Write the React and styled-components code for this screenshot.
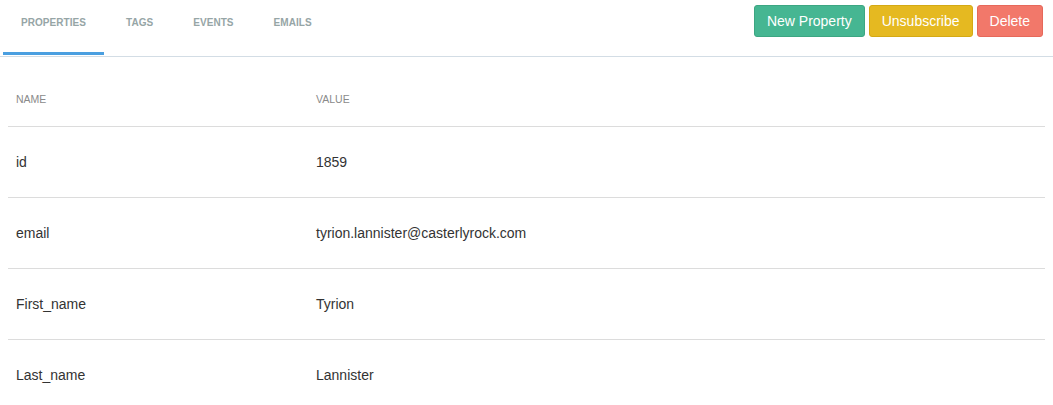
import React, {useState} from 'react';
import styled, {createGlobalStyle} from 'styled-components';

const GlobalStyle = createGlobalStyle`
  body {
    margin: 0;
    background: #fff;
    font-family: "Liberation Sans", Arial, sans-serif;
  }
`

const TopBar = styled.div`
  display: flex;
  align-items: stretch;
  justify-content: space-between;
  height: 56px;
  border-bottom: 1px solid #d3dde5;
`
const Tabs = styled.div`
  display: flex;
  padding-left: 1px;
`
const Tab = styled.div`
  position: relative;
  display: flex;
  align-items: center;
  padding: 0 20px 11px;
  font-size: 10px;
  font-weight: bold;
  letter-spacing: 0.05px;
  text-transform: uppercase;
  color: #96a5a6;
  cursor: pointer;

  &::after {
    content: '';
    display: ${props => props.active ? 'block' : 'none'};
    position: absolute;
    left: 2px;
    right: 2px;
    bottom: 1px;
    height: 3px;
    background-color: #4a9fe0;
  }
`
const Actions = styled.div`
  display: flex;
  gap: 4px;
  padding: 5px 10px 0 0;
`
const Button = styled.button`
  appearance: none;
  height: 32px;
  padding: 0 12px;
  border-radius: 3px;
  border: 1px solid ${props => props.border};
  background-color: ${props => props.bg};
  color: #fff;
  font-family: "Liberation Sans", Arial, sans-serif;
  font-size: 14px;
  cursor: pointer;
`
const Table = styled.div`
  margin: 0 8px;
  padding-top: 14px;
`
const Row = styled.div`
  display: grid;
  grid-template-columns: 300px 1fr;
  align-items: center;
  height: ${props => props.head ? '55px' : '70px'};
  border-bottom: 1px solid #dcdcdc;

  &:last-child {
    border-bottom: 0;
  }
`
const Cell = styled.div`
  padding: 0 8px;
  font-size: 14px;
  color: #333;
`
const HeadCell = styled.div`
  padding: 0 8px;
  font-size: 10.5px;
  text-transform: uppercase;
  color: #8a8a8a;
`

const properties = [
  {name: 'id', value: '1859'},
  {name: 'email', value: 'tyrion.lannister@casterlyrock.com'},
  {name: 'First_name', value: 'Tyrion'},
  {name: 'Last_name', value: 'Lannister'},
];

function App() {
  const [tab, setTab] = useState('properties');
  const tabs = ['properties', 'tags', 'events', 'emails'];

  return (
    <React.Fragment>
      <GlobalStyle/>
      <TopBar>
        <Tabs>
          {tabs.map((t) => (
            <Tab key={t} active={tab === t} onClick={() => setTab(t)}>{t}</Tab>
          ))}
        </Tabs>
        <Actions>
          <Button type='button' bg='#46b692' border='#3ca682'>New Property</Button>
          <Button type='button' bg='#e5b921' border='#d4a914'>Unsubscribe</Button>
          <Button type='button' bg='#f2786a' border='#e6685a'>Delete</Button>
        </Actions>
      </TopBar>
      <Table>
        <Row head>
          <HeadCell>Name</HeadCell>
          <HeadCell>Value</HeadCell>
        </Row>
        {properties.map((p) => (
          <Row key={p.name}>
            <Cell>{p.name}</Cell>
            <Cell>{p.value}</Cell>
          </Row>
        ))}
      </Table>
    </React.Fragment>
  );
}

export default App;
